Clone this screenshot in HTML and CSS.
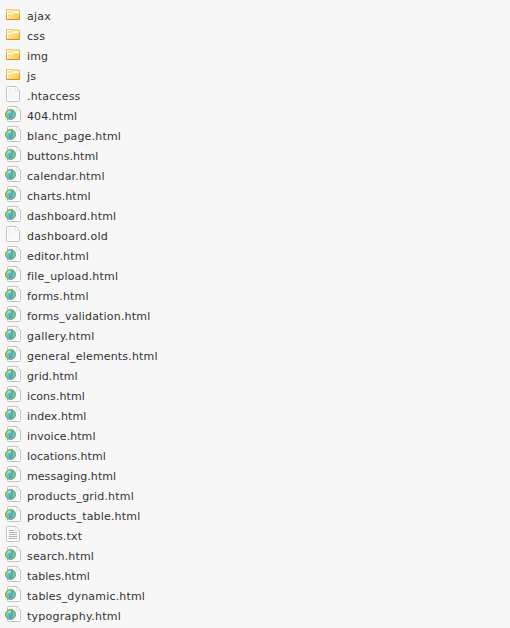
FILE: index.html
```html
<!DOCTYPE html>
<html lang="en">
<head>
<meta charset="utf-8">
<title>Files</title>
<link rel="stylesheet" href="styles.css">
</head>
<body>
<svg class="defs" aria-hidden="true">
  <defs>
    <linearGradient id="gold" x1="0" y1="0" x2="1" y2="1"><stop offset="0" stop-color="#fbe7a0"/><stop offset=".5" stop-color="#fadf84"/><stop offset="1" stop-color="#f3c52c"/></linearGradient>
    <linearGradient id="rim" x1="0" y1="0" x2="0" y2="1"><stop offset="0" stop-color="#ecc660"/><stop offset="1" stop-color="#d98f38"/></linearGradient>
    <linearGradient id="paper" x1="0" y1="0" x2="1" y2="1"><stop offset="0" stop-color="#f2f2f2"/><stop offset="1" stop-color="#fdfdfd"/></linearGradient>
    <radialGradient id="sea" cx=".5" cy=".45" r=".6"><stop offset="0" stop-color="#4fb0f4"/><stop offset="1" stop-color="#3b93cc"/></radialGradient>
    <symbol id="folder" viewBox="0 0 16 16">
      <path d="M1.5 13.5v-10H7l.5.5h7v9.5z" fill="url(#gold)" stroke="url(#rim)"/>
      <path d="M2.5 7V4.5H6.5M8 5.5h5.5" fill="none" stroke="#fffbe8"/>
      <path d="M2.5 13V7.5H7L8.5 6.5H14" fill="none" stroke="#fffdf0"/>
    </symbol>
    <symbol id="page" viewBox="0 0 16 16">
      <path d="M2.5.5h8.3l3.7 3.7v10.3q0 1-1 1h-11q-1 0-1-1v-13q0-1 1-1z" fill="url(#paper)" stroke="#c3c3c3"/>
      <path d="M2.5 14V1.5H10M2.5 14.5h11V5" fill="none" stroke="#fff"/>
      <path d="M10.5 1v3.5H14" fill="#fff" stroke="#d8d8d8" stroke-width=".7"/>
    </symbol>
    <symbol id="text" viewBox="0 0 16 16">
      <use href="#page"/>
      <path d="M4 4.5h5M4 6.5h8M4 8.5h8M4 10.5h8M4 12.5h8" stroke="#b5b5b5" fill="none"/>
    </symbol>
    <symbol id="html" viewBox="0 0 16 16">
      <use href="#page" x="1" width="16" height="16"/>
      <circle cx="5.5" cy="8.5" r="5" fill="url(#sea)"/>
      <path d="M1 8C1 5.5 3 3.8 5.4 3.8L7 4.5 5.7 6 4.4 6.6 4.6 8 3.3 8.5 4 10.5 3.8 12C2 11.5 1 10 1 8zM8 5l1.2.7q1.4 3 0 5l-1.5 1.8-.8-1L8 10 7.4 8.6 8.5 7.3z" fill="#86cb78"/>
      <circle cx="5.5" cy="8.5" r="4.3" fill="none" stroke="#98d27e" stroke-width=".8" opacity=".7"/>
      <circle cx="5.5" cy="8.5" r="5" fill="none" stroke="#6c9f60" stroke-width=".9"/>
      <ellipse cx="4.3" cy="5.9" rx="1.8" ry="1.2" fill="#d8f2cf" opacity=".55"/>
    </symbol>
  </defs>
</svg>
<ul class="files">
  <li><svg class="icon"><use href="#folder"/></svg><span class="wide">ajax</span></li>
  <li><svg class="icon"><use href="#folder"/></svg><span>css</span></li>
  <li><svg class="icon"><use href="#folder"/></svg><span class="tight">img</span></li>
  <li><svg class="icon"><use href="#folder"/></svg><span>js</span></li>
  <li><svg class="icon"><use href="#page"/></svg><span>.htaccess</span></li>
  <li><svg class="icon"><use href="#html"/></svg><span class="tight">404.html</span></li>
  <li><svg class="icon"><use href="#html"/></svg><span>blanc_page.html</span></li>
  <li><svg class="icon"><use href="#html"/></svg><span class="tight">buttons.html</span></li>
  <li><svg class="icon"><use href="#html"/></svg><span>calendar.html</span></li>
  <li><svg class="icon"><use href="#html"/></svg><span class="tight">charts.html</span></li>
  <li><svg class="icon"><use href="#html"/></svg><span>dashboard.html</span></li>
  <li><svg class="icon"><use href="#page"/></svg><span>dashboard.old</span></li>
  <li><svg class="icon"><use href="#html"/></svg><span>editor.html</span></li>
  <li><svg class="icon"><use href="#html"/></svg><span>file_upload.html</span></li>
  <li><svg class="icon"><use href="#html"/></svg><span>forms.html</span></li>
  <li><svg class="icon"><use href="#html"/></svg><span>forms_validation.html</span></li>
  <li><svg class="icon"><use href="#html"/></svg><span class="wide">gallery.html</span></li>
  <li><svg class="icon"><use href="#html"/></svg><span>general_elements.html</span></li>
  <li><svg class="icon"><use href="#html"/></svg><span class="tight">grid.html</span></li>
  <li><svg class="icon"><use href="#html"/></svg><span class="tight">icons.html</span></li>
  <li><svg class="icon"><use href="#html"/></svg><span class="tight">index.html</span></li>
  <li><svg class="icon"><use href="#html"/></svg><span class="tight">invoice.html</span></li>
  <li><svg class="icon"><use href="#html"/></svg><span class="tight">locations.html</span></li>
  <li><svg class="icon"><use href="#html"/></svg><span class="tight">messaging.html</span></li>
  <li><svg class="icon"><use href="#html"/></svg><span>products_grid.html</span></li>
  <li><svg class="icon"><use href="#html"/></svg><span>products_table.html</span></li>
  <li><svg class="icon"><use href="#text"/></svg><span>robots.txt</span></li>
  <li><svg class="icon"><use href="#html"/></svg><span>search.html</span></li>
  <li><svg class="icon"><use href="#html"/></svg><span class="tight">tables.html</span></li>
  <li><svg class="icon"><use href="#html"/></svg><span>tables_dynamic.html</span></li>
  <li><svg class="icon"><use href="#html"/></svg><span class="wide">typography.html</span></li>
</ul>
</body>
</html>
```
FILE: styles.css
```css
body {
  margin: 0;
  background: #f7f7f7;
  color: #333;
  font: 11px/20px "DejaVu Sans", Verdana, sans-serif;
  letter-spacing: 0.18px;
}

.defs {
  position: absolute;
  width: 0;
  height: 0;
}

.files {
  list-style: none;
  margin: 0;
  padding: 6px 0 0 5px;
}

.files li {
  display: flex;
  gap: 6px;
  height: 20px;
}

.files span {
  padding-top: 1px;
}

.tight {
  letter-spacing: 0.07px;
}

.wide {
  letter-spacing: 0.25px;
}

.icon {
  flex: none;
  width: 16px;
  height: 16px;
}
```
